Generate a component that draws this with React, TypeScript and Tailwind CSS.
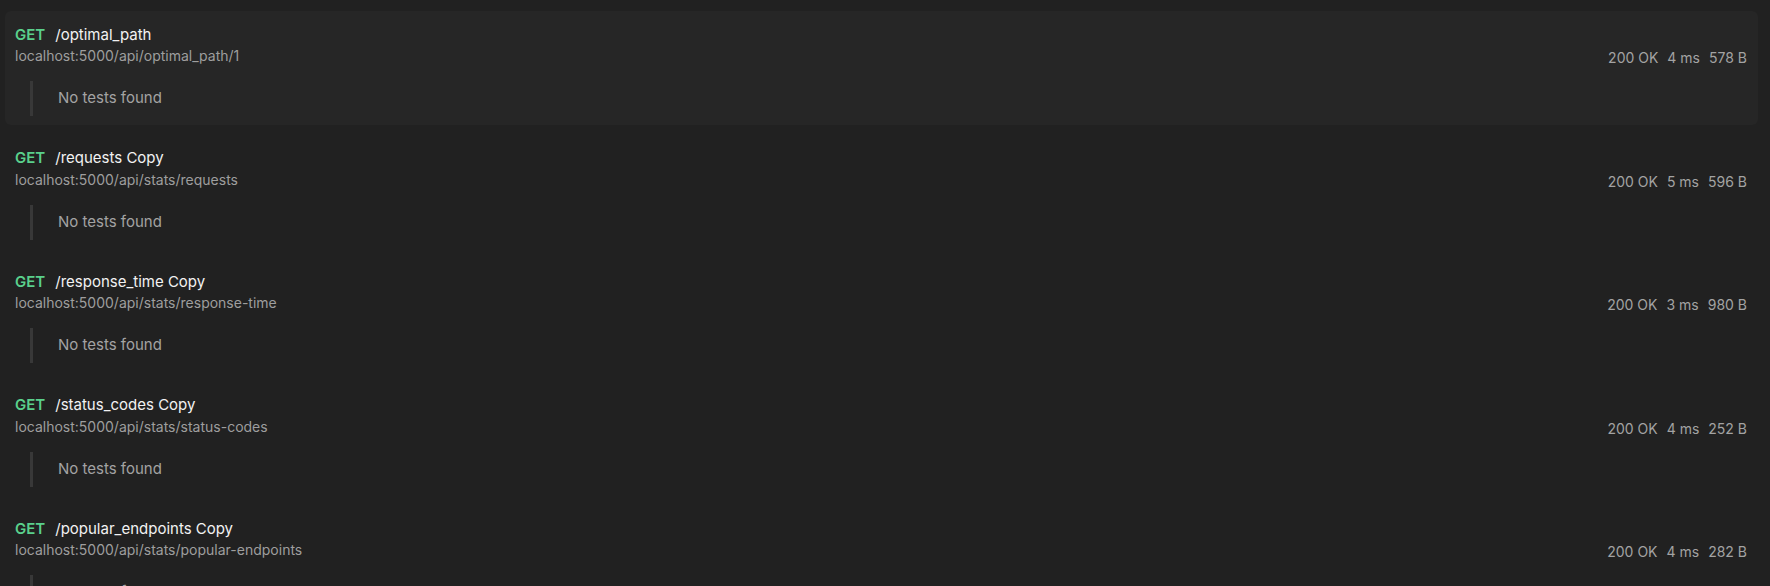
import React from 'react';

interface Run {
  name: string;
  url: string;
  status: string;
  time: string;
  size: string;
}

const runs: Run[] = [
  { name: '/optimal_path', url: 'localhost:5000/api/optimal_path/1', status: '200 OK', time: '4 ms', size: '578 B' },
  { name: '/requests Copy', url: 'localhost:5000/api/stats/requests', status: '200 OK', time: '5 ms', size: '596 B' },
  { name: '/response_time Copy', url: 'localhost:5000/api/stats/response-time', status: '200 OK', time: '3 ms', size: '980 B' },
  { name: '/status_codes Copy', url: 'localhost:5000/api/stats/status-codes', status: '200 OK', time: '4 ms', size: '252 B' },
  { name: '/popular_endpoints Copy', url: 'localhost:5000/api/stats/popular-endpoints', status: '200 OK', time: '4 ms', size: '282 B' },
];

const RunItem: React.FC<{ run: Run; active?: boolean }> = ({ run, active }) => (
  <div className={`rounded-md pl-[10px] pr-[11px] pt-[14px] pb-[9px] ${active ? 'bg-[#262626]' : ''}`}>
    <div className="flex justify-between items-start">
      <div>
        <div className="flex items-center h-[20px] text-[15px]">
          <span className="font-semibold text-[#5ad08c] mr-[10px]">GET</span>
          <span className="text-[#f2f2f2]">{run.name}</span>
        </div>
        <div className="mt-[1px] h-[20px] leading-[20px] text-[14px] text-[#9e9e9e]">{run.url}</div>
      </div>
      <div className="pt-[23px] flex gap-[9px] text-[14px] leading-[20px] text-[#a3a3a3]">
        <span>{run.status}</span>
        <span>{run.time}</span>
        <span>{run.size}</span>
      </div>
    </div>
    <div className="mt-[13px] ml-[15px] border-l-[3px] border-[#383838] h-[35px] flex items-center pl-[25px] text-[15px] text-[#a3a3a3]">
      No tests found
    </div>
  </div>
);

export default function App() {
  return (
    <div
      className="h-[586px] w-full overflow-hidden bg-[#212121] pl-[5px] pr-[12px] pt-[11px] flex flex-col gap-[9.5px]"
      style={{ fontFamily: 'Inter, "Liberation Sans", sans-serif' }}
    >
      {runs.map((run, i) => (
        <RunItem key={run.name} run={run} active={i === 0} />
      ))}
    </div>
  );
}
